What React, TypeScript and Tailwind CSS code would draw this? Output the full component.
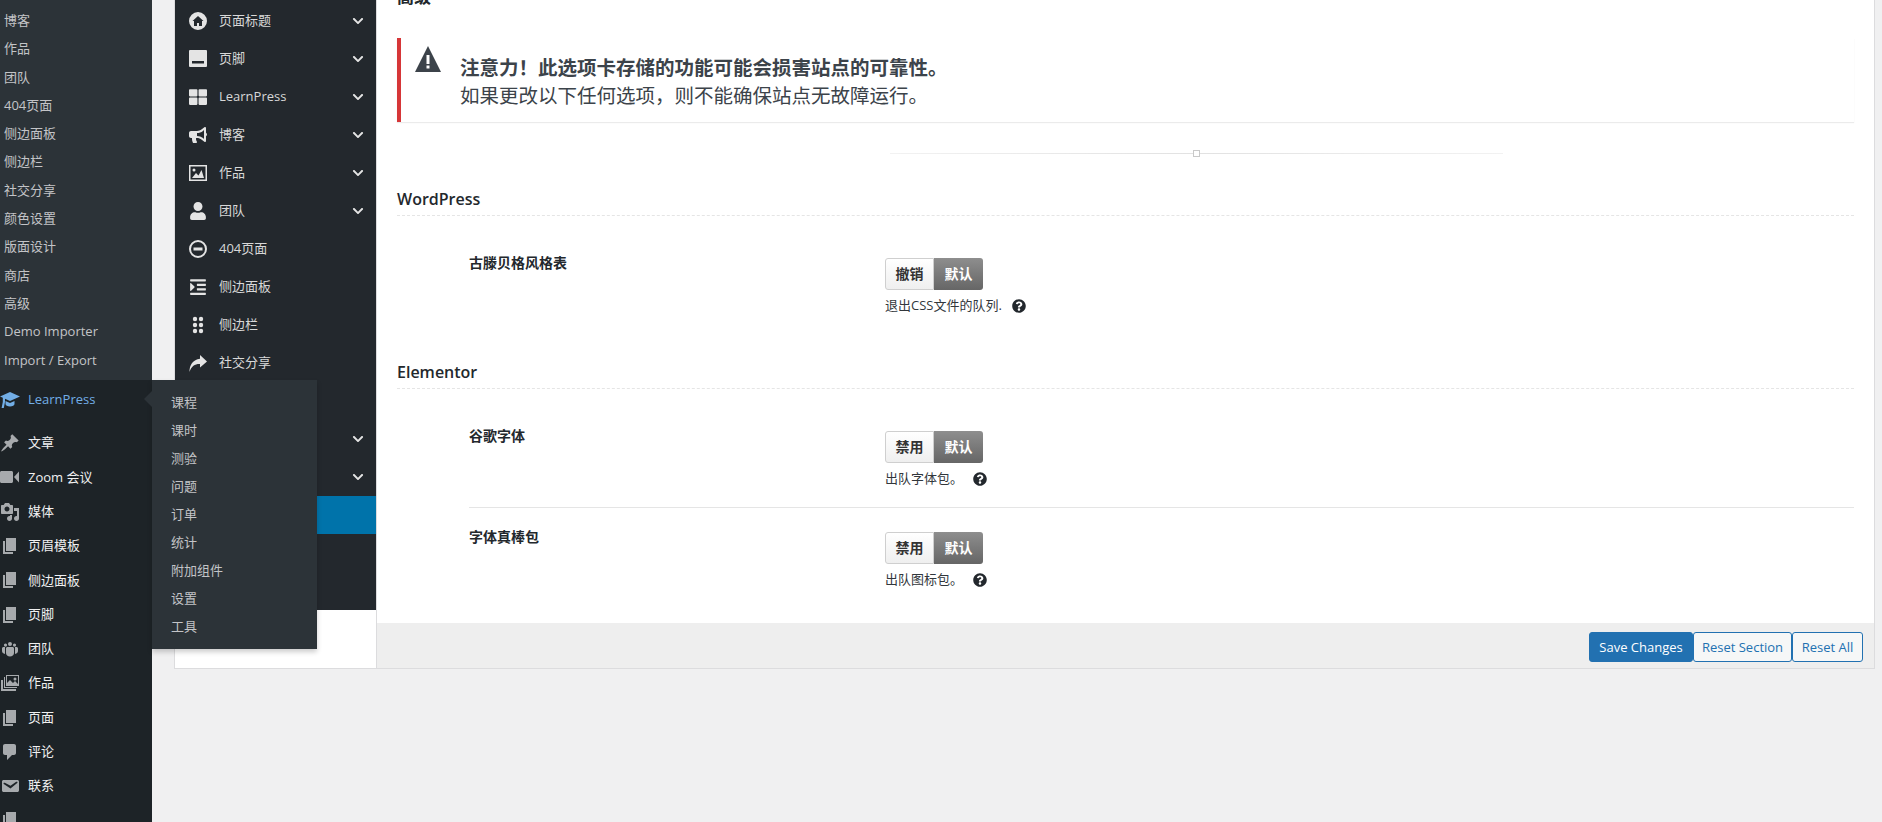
import React from "react";
import {
  FaBullhorn,
  FaChevronDown,
  FaIndent,
  FaQuestionCircle,
  FaThLarge,
  FaUser,
} from "react-icons/fa";

const FONT = "font-['Open_Sans','Noto_Sans_CJK_SC',sans-serif]";

function Dash({ d, className }: { d: string; className?: string }) {
  return (
    <svg viewBox="0 0 20 20" className={className ?? "w-5 h-5"} fill="currentColor">
      <path d={d} />
    </svg>
  );
}

const PAGE = "M6 15V2h10v13H6zm-1 1h8v2H3V5h2v11z";

const adminIcons: Record<string, string> = {
  pin: "M10.44 3.02l1.82-1.82 6.36 6.35-1.83 1.82c-1.05-.68-2.48-.57-3.41.36l-.75.75c-.92.93-1.04 2.35-.35 3.41l-1.83 1.82-2.41-2.41-2.8 2.79c-.42.42-3.38 2.71-3.8 2.29s1.86-3.39 2.28-3.81l2.79-2.79L4.1 9.36l1.83-1.82c1.05.69 2.48.57 3.4-.36l.75-.75c.93-.92 1.05-2.35.36-3.41z",
  video: "M0 5.5C0 4.7.7 4 1.5 4h10c.8 0 1.5.7 1.5 1.5v9c0 .8-.7 1.5-1.5 1.5h-10C.7 16 0 15.3 0 14.5zM14 10l5-5.5v11z",
  media: "M13 11V4c0-.55-.45-1-1-1h-1.67L9 1H5L3.67 3H2c-.55 0-1 .45-1 1v7c0 .55.45 1 1 1h10c.55 0 1-.45 1-1zM7 4.5c1.38 0 2.5 1.12 2.5 2.5S8.38 9.5 7 9.5 4.5 8.38 4.5 7 5.62 4.5 7 4.5zM14 6h5v10.5c0 1.38-1.12 2.5-2.5 2.5S14 17.88 14 16.5s1.12-2.5 2.5-2.5c.17 0 .34.02.5.05V9h-3V6zm-4 8.05V13h2v3.5c0 1.38-1.12 2.5-2.5 2.5S7 17.88 7 16.5 8.12 14 9.5 14c.17 0 .34.02.5.05z",
  page: PAGE,
  groups: "M10 3a2 2 0 1 1 0 4 2 2 0 0 1 0-4zM5.5 4.5a1.6 1.6 0 1 1 0 3.2 1.6 1.6 0 0 1 0-3.2zm9 0a1.6 1.6 0 1 1 0 3.2 1.6 1.6 0 0 1 0-3.2zM7.5 8h5c.8 0 1.5.7 1.5 1.5V14c0 2-1.8 3.5-4 3.5S6 16 6 14V9.500C6 8.700 6.700 8 7.500 8zM2 9.500C2 8.700 2.700 8 3.500 8H5v7c-1.800-.3-3-1.500-3-3zM18 9.500V12c0 1.500-1.200 2.700-3 3V8h1.500c.8 0 1.500.7 1.500 1.500z",
  gallery: "M6 2h13v11H6zm1 1v7l3-3 3 3 2-2 3 3V3zm8 1.500a1.500 1.500 0 1 1 0 3 1.500 1.500 0 0 1 0-3zM4 4h1v10h12v1H4zM1 7h2v9h13v2H1z",
  comment: "M5 2h9c1.100 0 2 .9 2 2v7c0 1.100-.9 2-2 2h-2l-5 5v-5H5c-1.100 0-2-.9-2-2V4c0-1.100.9-2 2-2z",
  email: "M3.870 4h13.250C18.370 4 19 4.590 19 5.790v8.420c0 1.190-.63 1.790-1.880 1.790H3.870c-1.250 0-1.880-.6-1.880-1.790V5.790c0-1.200.63-1.790 1.880-1.790zm6.620 8.600l6.740-5.530c.24-.2.43-.66.13-1.070-.29-.41-.82-.42-1.170-.17l-5.700 3.860L4.800 6.830c-.35-.25-.88-.24-1.170.17-.3.41-.11.87.13 1.070z",
  cap: "M10 2l10 4.500-10 4.500-5-2.250V12l-1.200 6H1.600l1.200-6V7.800L0 6.500zM5.500 11l4.500 2 4.500-2v3c0 1.200-2 2.500-4.500 2.500S5.500 15.200 5.500 14z",
};

const submenu = ["博客", "作品", "团队", "404页面", "侧边面板", "侧边栏", "社交分享", "颜色设置", "版面设计", "商店", "高级", "Demo Importer", "Import / Export"];

const adminMenu = [
  { icon: "pin", label: "文章" },
  { icon: "video", label: "Zoom 会议" },
  { icon: "media", label: "媒体" },
  { icon: "page", label: "页眉模板" },
  { icon: "page", label: "侧边面板" },
  { icon: "page", label: "页脚" },
  { icon: "groups", label: "团队" },
  { icon: "gallery", label: "作品" },
  { icon: "page", label: "页面" },
  { icon: "comment", label: "评论" },
  { icon: "email", label: "联系" },
  { icon: "page", label: "" },
];

const flyout = ["课程", "课时", "测验", "问题", "订单", "统计", "附加组件", "设置", "工具"];

function AdminSidebar() {
  return (
    <aside className="relative w-[152px] shrink-0 bg-[#1d2327] text-[13px]">
      <div className="h-[380px] bg-[#2c3338] pt-[6px] text-[#c3c4c7]">
        {submenu.map((s) => (
          <div key={s} className="h-[28.3px] pl-1 leading-[28px] whitespace-nowrap">{s}</div>
        ))}
      </div>
      <div className="flex h-[39px] items-center text-[#72aee6]">
        <Dash d={adminIcons.cap} className="h-5 w-5 shrink-0" />
        <span className="ml-2">LearnPress</span>
      </div>
      <div className="mt-[7px] text-[#f0f0f1]">
        {adminMenu.map((m, i) => (
          <div key={i} className="flex h-[34.3px] items-center">
            <span className="text-[#a7aaad]"><Dash d={adminIcons[m.icon]} className="h-5 w-5" /></span>
            <span className="ml-2 whitespace-nowrap">{m.label}</span>
          </div>
        ))}
      </div>

      {/* hover flyout */}
      <div className="absolute left-[152px] top-[380px] z-10 h-[269px] w-[165px] bg-[#2c3338] pt-2 text-[#c3c4c7] shadow-[0_3px_5px_rgba(0,0,0,0.2)]">
        {flyout.map((s) => (
          <div key={s} className="h-7 pl-[19px] leading-[28px]">{s}</div>
        ))}
      </div>
      <div className="absolute left-[144px] top-[391px] z-10 h-0 w-0 border-y-[8px] border-r-[8px] border-y-transparent border-r-[#2c3338]" />
    </aside>
  );
}

function HomeIcon() {
  return (
    <svg viewBox="0 0 18 18" className="h-[18px] w-[18px]" fill="currentColor">
      <path fillRule="evenodd" d="M9 0a9 9 0 1 1 0 18A9 9 0 0 1 9 0zm0 4L3.500 9H5v5h3v-3h2v3h3V9h1.500z" />
    </svg>
  );
}
function FooterIcon() {
  return (
    <svg viewBox="0 0 18 18" className="h-[18px] w-[18px]" fill="currentColor">
      <path fillRule="evenodd" d="M1 0h16a1 1 0 0 1 1 1v15a1 1 0 0 1-1 1H1a1 1 0 0 1-1-1V1a1 1 0 0 1 1-1zm2 11v2.500h12V11z" />
    </svg>
  );
}
function PictureIcon() {
  return (
    <svg viewBox="0 0 18 18" className="h-[18px] w-[18px]" fill="currentColor">
      <path fillRule="evenodd" d="M0 1h18v16H0zm1.500 1.500v13h15v-13zM3 14l4-5 2.500 2.500L12.500 6 15 14zM5 4.500a1.500 1.500 0 1 1 0 3 1.500 1.500 0 0 1 0-3z" />
    </svg>
  );
}
function MinusIcon() {
  return (
    <svg viewBox="0 0 18 18" className="h-[18px] w-[18px]" fill="currentColor">
      <path fillRule="evenodd" d="M9 0a9 9 0 1 1 0 18A9 9 0 0 1 9 0zm0 2a7 7 0 1 0 0 14A7 7 0 0 0 9 2zM4.500 7.500h9v3h-9z" />
    </svg>
  );
}
function DotsIcon() {
  return (
    <svg viewBox="0 0 18 18" className="h-[18px] w-[18px]" fill="currentColor">
      <circle cx="6" cy="3" r="2.200" />
      <circle cx="12" cy="3" r="2.200" />
      <circle cx="6" cy="9" r="2.200" />
      <circle cx="12" cy="9" r="2.200" />
      <circle cx="6" cy="15" r="2.200" />
      <circle cx="12" cy="15" r="2.200" />
    </svg>
  );
}
function ShareIcon() {
  return (
    <svg viewBox="0 0 18 18" className="h-[18px] w-[18px]" fill="currentColor">
      <path d="M11 1l7 6.500-7 6V10C6 9.800 2.500 12 .5 18 .4 11 4 5.500 11 4.800z" />
    </svg>
  );
}

const panelMenu: { icon?: React.ReactNode; label: string; more?: boolean; active?: boolean }[] = [
  { icon: <HomeIcon />, label: "页面标题", more: true },
  { icon: <FooterIcon />, label: "页脚", more: true },
  { icon: <FaThLarge size={18} />, label: "LearnPress", more: true },
  { icon: <FaBullhorn size={18} />, label: "博客", more: true },
  { icon: <PictureIcon />, label: "作品", more: true },
  { icon: <FaUser size={18} />, label: "团队", more: true },
  { icon: <MinusIcon />, label: "404页面" },
  { icon: <FaIndent size={18} />, label: "侧边面板" },
  { icon: <DotsIcon />, label: "侧边栏" },
  { icon: <ShareIcon />, label: "社交分享" },
  { label: "颜色设置" },
  { label: "版面设计", more: true },
  { label: "商店", more: true },
  { label: "高级", active: true },
  { label: "Demo Importer" },
  { label: "Import / Export" },
];

function PanelNav() {
  return (
    <nav className="w-[202px] shrink-0 border-r border-[#dcdcde] bg-white">
      <div className="h-[610px] overflow-hidden bg-[#23282d] pt-[2px] text-[13px] text-[#d8d8d8]">
        {panelMenu.map((m) => (
          <div key={m.label} className={`flex h-[38px] items-center ${m.active ? "bg-[#0073aa] text-white" : ""}`}>
            <span className="flex w-[44px] shrink-0 justify-center pl-[2px] text-[#e4e4e4]">{m.icon}</span>
            <span className="whitespace-nowrap">{m.label}</span>
            {m.more && <FaChevronDown size={12} className="ml-auto mr-[12px] text-[#e4e4e4]" />}
          </div>
        ))}
      </div>
    </nav>
  );
}

function Toggle({ off }: { off: string }) {
  return (
    <div className="flex h-8 w-[98px] text-sm font-bold leading-[30px]">
      <span className="w-[49px] rounded-l-[3px] border border-[#cfcfcf] bg-linear-to-b from-white to-[#efefef] text-center text-[#333]">{off}</span>
      <span className="w-[49px] rounded-r-[3px] bg-linear-to-b from-[#8e8e8e] to-[#666] text-center leading-8 text-white">默认</span>
    </div>
  );
}

function Row({ label, off, desc }: { label: string; off: string; desc: string }) {
  return (
    <div className="flex pl-[72px]">
      <div className="-mt-[6px] w-[416px] shrink-0 text-sm font-bold leading-[22px] text-[#23282d]">{label}</div>
      <div>
        <Toggle off={off} />
        <div className="mt-[6px] flex h-5 items-center text-[13px] whitespace-nowrap text-[#32373c]">
          {desc}
          <FaQuestionCircle size={14} className="ml-[10px] text-[#23282d]" />
        </div>
      </div>
    </div>
  );
}

function SectionHead({ title }: { title: string }) {
  return (
    <h3 className="h-[29px] border-b border-dashed border-[#e5e5e5] text-base font-semibold leading-6 text-[#23282d]">{title}</h3>
  );
}

function Main() {
  return (
    <main className="flex min-w-0 flex-1 flex-col">
      <div className="flex-1 overflow-hidden px-5">
        <h2 className="-mt-[14px] h-[22px] text-[17px] font-bold leading-[22px] text-[#23282d]">高级</h2>
        <div className="mt-[30px] flex h-[84px] border-l-[4px] border-[#d63638] shadow-[0_1px_1px_rgba(0,0,0,0.08)]">
          <svg viewBox="0 0 26 26" className="ml-[14px] mt-2 h-[26px] w-[26px] shrink-0 text-[#3c434a]" fill="currentColor">
            <path fillRule="evenodd" d="M13 0l13 26H0zm-1.500 9v9h3V9zm0 10.500v3h3v-3z" />
          </svg>
          <div className="ml-[19px] pt-4 text-[19.5px] leading-7 text-[#3c434a]">
            <div className="font-bold">注意力！此选项卡存储的功能可能会损害站点的可靠性。</div>
            <div>如果更改以下任何选项，则不能确保站点无故障运行。</div>
          </div>
        </div>

        <div className="mt-[28px] ml-[493px] flex h-[7px] w-[613px] items-center">
          <div className="h-px flex-1 bg-linear-to-r from-[#f2f2f2] to-[#e2e2e2]" />
          <div className="h-[7px] w-[7px] border border-[#c9c9c9] bg-white" />
          <div className="h-px flex-1 bg-linear-to-l from-[#f2f2f2] to-[#e2e2e2]" />
        </div>

        <div className="mt-[30px]"><SectionHead title="WordPress" /></div>
        <div className="pt-[42px]">
          <Row label="古滕贝格风格表" off="撤销" desc="退出CSS文件的队列." />
        </div>

        <div className="mt-[44px]"><SectionHead title="Elementor" /></div>
        <div className="pt-[42px] pb-[18px]">
          <Row label="谷歌字体" off="禁用" desc="出队字体包。" />
        </div>
        <div className="ml-[72px] border-t border-[#e5e5e5] pt-[24px]">
          <div className="-ml-[72px]">
            <Row label="字体真棒包" off="禁用" desc="出队图标包。" />
          </div>
        </div>
      </div>

      <footer className="flex h-[45px] items-start justify-end bg-[#eeeeee] pr-[11px] pt-[9px] text-[13px]">
        <button className="h-[30px] w-[104px] rounded-[3px] border border-[#2271b1] bg-[#2271b1] pt-[2px] text-white">Save Changes</button>
        <button className="h-[30px] w-[99px] rounded-[3px] border border-[#2271b1] bg-[#f6f7f7] pt-[2px] text-[#2271b1]">Reset Section</button>
        <button className="h-[30px] w-[71px] rounded-[3px] border border-[#2271b1] bg-[#f6f7f7] pt-[2px] text-[#2271b1]">Reset All</button>
      </footer>
    </main>
  );
}

export default function App() {
  return (
    <div className={`flex h-[822px] w-[1882px] overflow-hidden bg-[#f0f0f1] ${FONT}`}>
      <AdminSidebar />
      <div className="ml-[22px] flex h-[669px] w-[1701px] border-x border-b border-[#dcdcde] bg-white">
        <PanelNav />
        <Main />
      </div>
    </div>
  );
}
